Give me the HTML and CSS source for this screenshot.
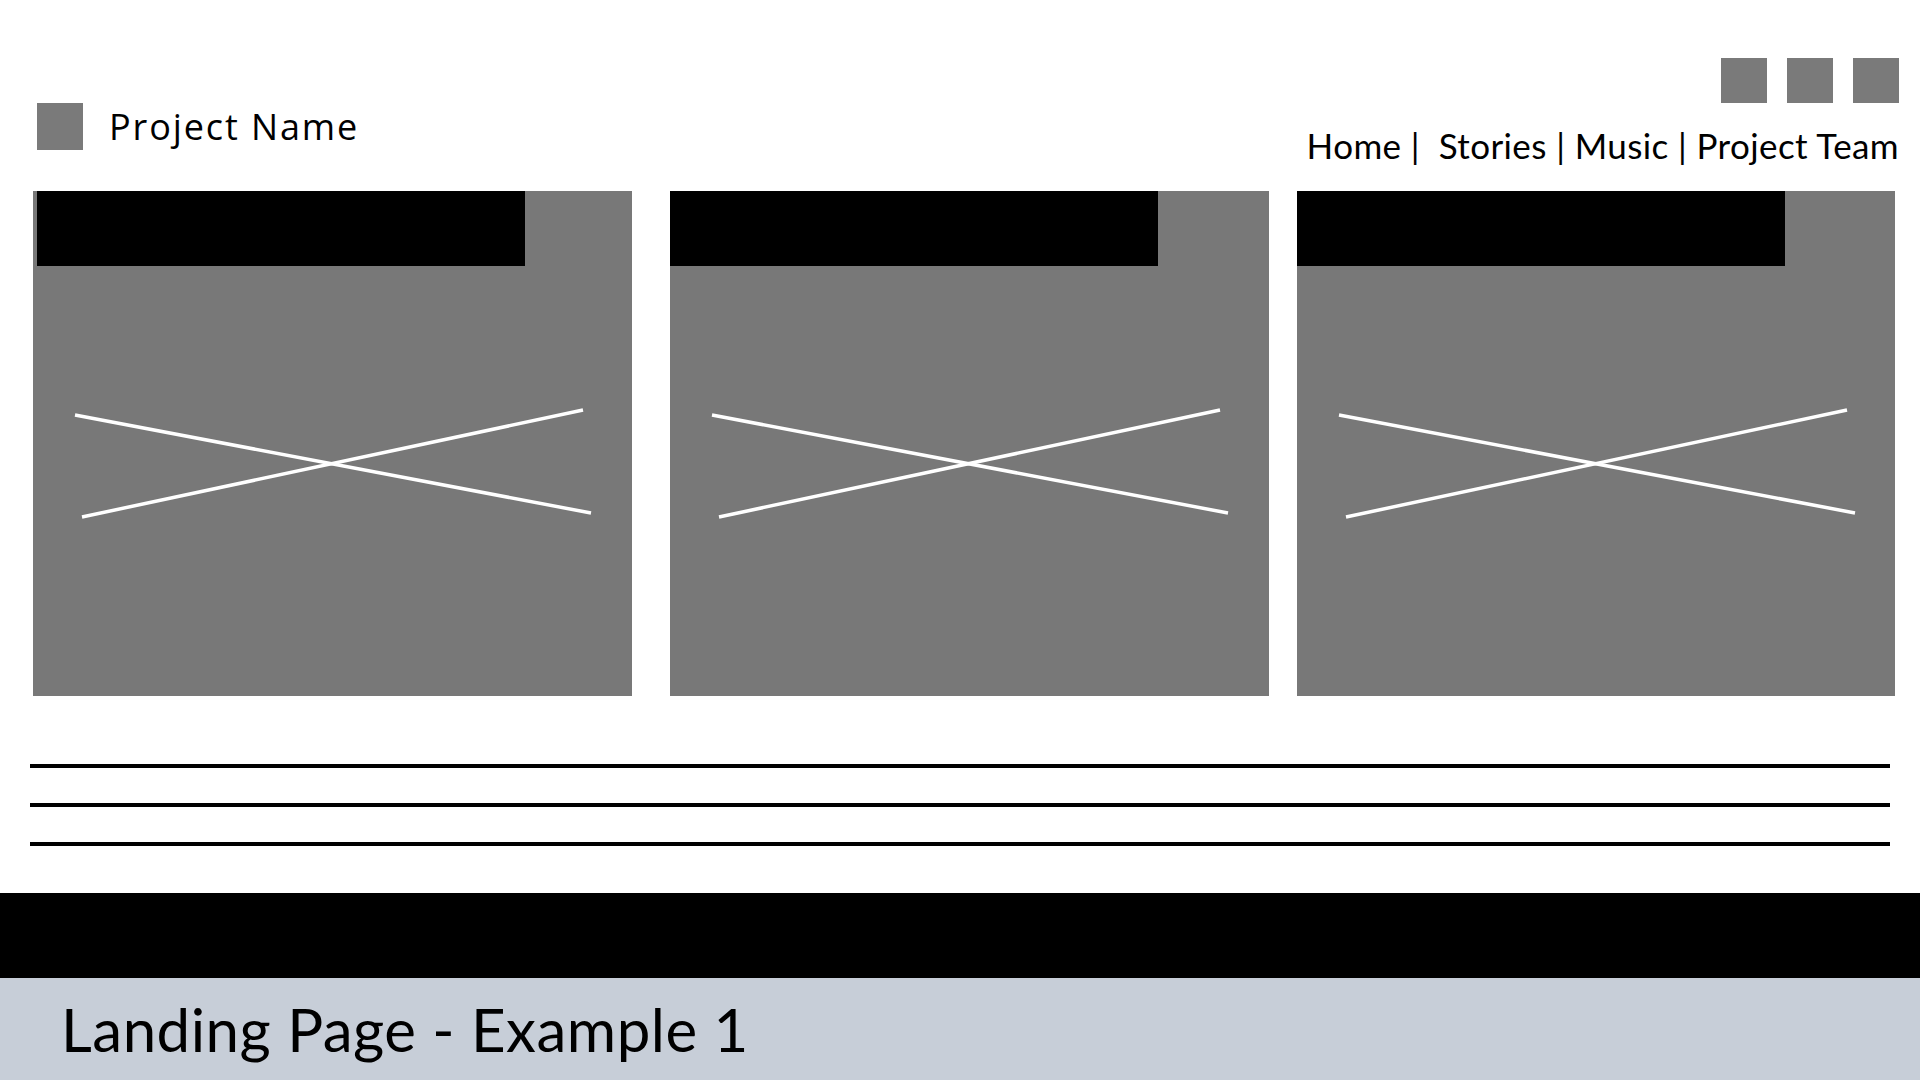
FILE: index.html
```html
<!DOCTYPE html>
<html lang="en">
<head>
  <meta charset="UTF-8">
  <meta name="viewport" content="width=device-width, initial-scale=1.0">
  <title>Landing Page - Example 1</title>
  <link rel="stylesheet" href="styles.css">
</head>
<body>
  <div class="page">
    <header class="header">
      <div class="brand">
        <div class="logo"></div>
        <span class="brand-name">Project Name</span>
      </div>
      <div class="nav-side">
        <div class="squares">
          <div class="square"></div>
          <div class="square"></div>
          <div class="square"></div>
        </div>
        <nav class="nav">Home |&nbsp; Stories | Music | Project Team</nav>
      </div>
    </header>

    <section class="cards">
      <div class="card card-first">
        <div class="card-bar"></div>
        <svg class="card-x" viewBox="0 0 599 505">
          <line x1="42" y1="224" x2="558" y2="322" />
          <line x1="49" y1="326" x2="550" y2="219" />
        </svg>
      </div>
      <div class="card card-second">
        <div class="card-bar"></div>
        <svg class="card-x" viewBox="0 0 599 505">
          <line x1="42" y1="224" x2="558" y2="322" />
          <line x1="49" y1="326" x2="550" y2="219" />
        </svg>
      </div>
      <div class="card card-third">
        <div class="card-bar"></div>
        <svg class="card-x" viewBox="0 0 599 505">
          <line x1="42" y1="224" x2="558" y2="322" />
          <line x1="49" y1="326" x2="550" y2="219" />
        </svg>
      </div>
    </section>

    <section class="text-lines">
      <div class="text-line"></div>
      <div class="text-line"></div>
      <div class="text-line"></div>
    </section>

    <footer class="footer">
      <div class="footer-bar"></div>
      <div class="footer-caption">Landing Page - Example 1</div>
    </footer>
  </div>
</body>
</html>
```

FILE: styles.css
```css
body {
  margin: 0;
  background: #fff;
  color: #000;
  font-family: "Open Sans", sans-serif;
}
.page {
  width: 1920px;
  height: 1080px;
  display: flex;
  flex-direction: column;
  overflow: hidden;
}
.header {
  display: flex;
  justify-content: space-between;
  align-items: flex-start;
  height: 191px;
  padding: 0 21px 0 37px;
  box-sizing: border-box;
}
.brand {
  display: flex;
  align-items: center;
  gap: 26px;
  margin-top: 103px;
  height: 47px;
}
.logo {
  width: 46px;
  height: 47px;
  background: #7a7a7a;
}
.brand-name {
  font-family: "Open Sans", sans-serif;
  font-size: 36px;
  letter-spacing: 1.9px;
  line-height: 47px;
}
.nav-side {
  display: flex;
  flex-direction: column;
  align-items: flex-end;
  padding-top: 58px;
}
.squares {
  display: flex;
  gap: 20px;
}
.square {
  width: 46px;
  height: 45px;
  background: #7a7a7a;
}
.nav {
  font-family: "Lato", sans-serif;
  font-size: 35px;
  letter-spacing: 0.4px;
  line-height: 40px;
  margin-top: 22px;
  white-space: pre;
}
.cards {
  display: flex;
  padding-left: 33px;
  height: 505px;
}
.card {
  position: relative;
  width: 599px;
  height: 505px;
  background: #787878;
}
.card-second {
  margin-left: 38px;
}
.card-third {
  margin-left: 28px;
  width: 598px;
}
.card-bar {
  width: 488px;
  height: 75px;
  background: #000;
}
.card-first .card-bar {
  margin-left: 4px;
}
.card-x {
  position: absolute;
  top: 0;
  left: 0;
  width: 599px;
  height: 505px;
}
.card-x line {
  stroke: #fff;
  stroke-width: 3.5;
}
.text-lines {
  display: flex;
  flex-direction: column;
  gap: 35px;
  margin: 68px 30px 0 30px;
}
.text-line {
  height: 4px;
  background: #000;
}
.footer {
  margin-top: auto;
}
.footer-bar {
  height: 85px;
  background: #000;
}
.footer-caption {
  height: 102px;
  background: #c7ced8;
  box-sizing: border-box;
  padding-left: 61px;
  font-family: "Lato", sans-serif;
  font-size: 60px;
  letter-spacing: 0.5px;
  line-height: 102px;
}
```
